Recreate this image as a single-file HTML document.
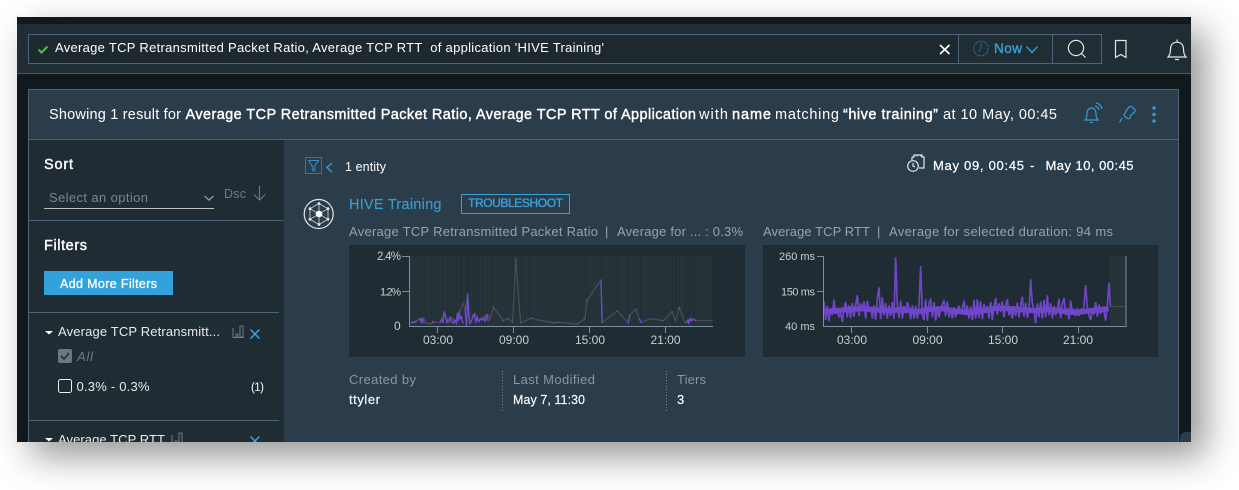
<!DOCTYPE html>
<html><head><meta charset="utf-8"><style>
html,body{margin:0;padding:0;background:#fff;width:1239px;height:490px;overflow:hidden}
#box{position:absolute;left:17px;top:17px;width:1174px;height:425px;box-shadow:14px 14px 34px rgba(0,0,0,.42)}
svg{position:absolute;left:0;top:0;display:block}
text{font-family:"Liberation Sans",sans-serif;font-size:13px;fill:#fff;white-space:pre}
.m{stroke:#fff;stroke-width:.4}
.g{fill:#99a3a9}
.t{fill:#c9ced1;font-size:11.5px;text-anchor:middle}
.y{fill:#c9ced1;font-size:11px}
.b{fill:none;stroke:#3a9bd0;stroke-width:1.2}
.w{fill:none;stroke:#e4e7e8;stroke-width:1.2}
.ax{stroke:#7c8f9e;stroke-width:1;fill:none}
</style></head><body>
<div id="box"></div>
<svg width="1239" height="490" viewBox="0 0 1239 490">
<defs><clipPath id="c"><rect x="17" y="17" width="1174" height="425"/></clipPath></defs>
<g clip-path="url(#c)">
<rect x="17" y="17" width="1174" height="425" fill="#12191d"/>
<rect x="17" y="24" width="1174" height="49" fill="#202d35"/>
<rect x="17" y="73" width="1174" height="1" fill="#465b6b"/>
<rect x="28.5" y="34.5" width="1073" height="29" fill="#1d282f" stroke="#4d6479"/>
<rect x="958" y="35" width="143" height="28" fill="#202d35"/>
<path d="M958.5 34.5V63.5M1052.5 34.5V63.5" stroke="#4d6479"/>
<path d="M38.5 49.5l3 3 6-6" fill="none" stroke="#4fb848" stroke-width="2.2"/>
<text x="55" y="52" textLength="549">Average TCP Retransmitted Packet Ratio, Average TCP RTT  of application 'HIVE Training'</text>
<path d="M940 45l9.5 9M949.5 45l-9.5 9" stroke="#fff" stroke-width="1.6" fill="none"/>
<circle cx="981" cy="48.5" r="7.3" fill="none" stroke="#246d95" stroke-width="1.1" stroke-dasharray="2 .8"/>
<path d="M981 43v5.5l-2.5 3" fill="none" stroke="#246d95"/>
<text x="994" y="53" textLength="28" class="m" style="fill:#3a9bd0;stroke:#3a9bd0;font-size:13.5px">Now</text>
<path d="M1026.5 46.5l5.5 6 5.5-6" fill="none" stroke="#3a9bd0" stroke-width="1.4"/>
<circle cx="1076" cy="48" r="7.6" class="w" stroke-width="1.3"/>
<path d="M1081.5 53.5l4 4" class="w"/>
<path d="M1115.5 40.5h10.5v17l-5.2-3-5.3 3z" class="w"/>
<path d="M1168 57c2-2 2.5-4 2.5-8 0-4 2.5-6.8 6.5-6.8s6.5 2.8 6.5 6.8c0 4 .5 6 2.5 8z M1177 39.5v2.5M1175 59.5h4" class="w"/>

<rect x="28.5" y="89.5" width="1150" height="360" fill="#2b3c4b" stroke="#4d6479"/>
<rect x="29" y="139" width="1149" height="1" fill="#4d6479"/>
<rect x="29" y="140" width="255" height="302" fill="#1f2c34"/>
<rect x="1179" y="90" width="12" height="352" fill="#12191d"/>
<path d="M1180 442v-4q0-5 5-6h6v10z" fill="#2b3c4b"/>

<text x="49" y="119" textLength="132" style="font-size:14.5px">Showing 1 result for</text>
<text x="185.5" y="119" textLength="510.5" class="m" style="font-size:14.5px">Average TCP Retransmitted Packet Ratio, Average TCP RTT of Application</text>
<text x="699" y="119" textLength="29" style="font-size:14.5px">with</text>
<text x="732" y="119" textLength="39" class="m" style="font-size:14.5px">name</text>
<text x="775" y="119" textLength="64" style="font-size:14.5px">matching</text>
<text x="843" y="119" textLength="95" class="m" style="font-size:14.5px">“hive training”</text>
<text x="943" y="119" textLength="114" style="font-size:14.5px">at 10 May, 00:45</text>

<path d="M1085 120c1.5-1.5 2-3 2-6.500 0-3 1.700-5.500 4.500-5.500s4.500 2.500 4.500 5.500c0 3.500.5 5 2 6.500z M1090 122.500h3M1095 106c2 .5 3.500 2 4 4M1096 103c3 .5 5.500 3 6 6" class="b"/>
<path d="M1126 111l3-4c1-1 2-1 3 0l2.500 2c1 1 1 2 0 3l-4 3.500-.5 2.500c-.5 1-1.500 1-2.500.5l-3-2.500c-1-1-.5-2 .5-2.500zM1122 118l-2.500 4.500" class="b" stroke-width="1.5"/>
<circle cx="1154" cy="108" r="1.7" fill="#3a9bd0"/><circle cx="1154" cy="114.5" r="1.7" fill="#3a9bd0"/><circle cx="1154" cy="121" r="1.7" fill="#3a9bd0"/>

<!-- sidebar -->
<text x="44" y="169" textLength="29" class="m" style="font-size:14.5px">Sort</text>
<text x="49" y="202" textLength="99" style="fill:#7b868d">Select an option</text>
<path d="M204.5 196l4.500 4 4.500-4" fill="none" stroke="#8a949a" stroke-width="1.5"/>
<rect x="44" y="208" width="170" height="1" fill="#b9bfc2"/>
<text x="224" y="198" textLength="22" style="fill:#6f7b82;font-size:12.5px">Dsc</text>
<path d="M259.5 186v14M254 194.500l5.500 5.500 5.500-5.500" fill="none" stroke="#6f7b82" stroke-width="1.1"/>
<rect x="29" y="220" width="255" height="1" fill="#4d6479"/>
<text x="44" y="250" textLength="43" class="m" style="font-size:14.5px">Filters</text>
<rect x="44" y="271" width="129" height="24" fill="#34a2da"/>
<text x="60" y="288" textLength="97" class="m" style="font-size:12.5px;stroke-width:.3">Add More Filters</text>
<rect x="29" y="312" width="250" height="1" fill="#4d6479"/>
<path d="M45 331h8l-4 3.500z" fill="#fff"/>
<text x="58" y="336" textLength="162" style="fill:#e8eaeb">Average TCP Retransmitt...</text>
<path d="M232.5 337.500h11.500M233 328v9M236 334v3h2v-3zM240 329v8h3v-11h-3z" fill="none" stroke="#717c83"/>
<path d="M250.5 329.500l9 9M259.5 329.500l-9 9" stroke="#35a9e5" stroke-width="1.4" fill="none"/>
<rect x="58" y="349" width="14" height="14" rx="2" fill="#6b7682"/>
<path d="M61 356l3 3 5-6" fill="none" stroke="#232d34" stroke-width="1.6"/>
<text x="77" y="361" textLength="16" style="fill:#6f7b82;font-style:italic">All</text>
<rect x="58.5" y="379.500" width="13" height="13" rx="2" fill="none" stroke="#eef0f1"/>
<text x="76.5" y="391" textLength="73" style="fill:#e8eaeb">0.3% - 0.3%</text>
<text x="251" y="391" textLength="13" style="font-size:11.5px">(1)</text>
<rect x="29" y="420" width="250" height="1" fill="#4d6479"/>
<path d="M45 438h8l-4 3.500z" fill="#fff"/>
<text x="58" y="444" textLength="107" style="fill:#e8eaeb">Average TCP RTT</text>
<path d="M171.5 444.500h11.500M172 435v9M175 441v3h2v-3zM179 436v8h3v-11h-3z" fill="none" stroke="#717c83"/>
<path d="M250.5 436.500l9 9M259.500 436.500l-9 9" stroke="#35a9e5" stroke-width="1.4" fill="none"/>

<!-- right top -->
<rect x="305.5" y="157.500" width="16" height="16" fill="none" stroke="#2b78a3" stroke-width="1"/>
<path d="M308.5 160.500h10l-3.800 5.500v5l-2.400-1v-4z" fill="none" stroke="#3a8fbd"/>
<path d="M332 163l-5 4.500 5 4.500" fill="none" stroke="#3a9bd0" stroke-width="1.5"/>
<text x="345" y="171" textLength="41" style="font-size:12.5px">1 entity</text>
<circle cx="913" cy="166" r="5.3" class="w" fill="none"/>
<path d="M913 163v3l2 1M912 157h2v-2h8v2h2v11h-5M912 157v3M917 154.500v2M921 154.500v2" class="w" stroke-width="1"/>
<text x="933" y="170" textLength="91" class="m" style="font-size:13px;stroke-width:.25">May 09, 00:45</text>
<text x="1030" y="170" class="m" style="font-size:13px;stroke-width:.25">-</text>
<text x="1045.5" y="170" textLength="88" class="m" style="font-size:13px;stroke-width:.25">May 10, 00:45</text>

<!-- hive -->
<circle cx="318.7" cy="214" r="14.500" fill="none" stroke="#e4e7e8" stroke-width="1.2"/>
<path d="M319 203.500l9 5.200v10.600l-9 5.200-9-5.200v-10.600zM319 203.500v21M310 208.700l18 10.600M328 208.700l-18 10.600" fill="none" stroke="#d8dcde" stroke-width=".8"/>
<circle cx="319" cy="214" r="3.3" fill="#fff"/>
<g fill="#e8eaeb"><circle cx="319" cy="203.500" r="1.4"/><circle cx="328" cy="208.700" r="1.4"/><circle cx="328" cy="219.300" r="1.4"/><circle cx="319" cy="224.500" r="1.4"/><circle cx="310" cy="219.300" r="1.4"/><circle cx="310" cy="208.700" r="1.4"/></g>
<text x="349" y="209" textLength="92.5" style="fill:#3a9bd0;font-size:14.5px;stroke:#3a9bd0;stroke-width:.15">HIVE Training</text>
<rect x="461.5" y="194.500" width="108" height="19" fill="none" stroke="#3aa3dc" stroke-width="1"/>
<text x="468" y="207" textLength="95" class="m" style="fill:#3aa3dc;stroke:#3aa3dc;font-size:12px;stroke-width:.35">TROUBLESHOOT</text>

<text x="349" y="236" textLength="249" class="g">Average TCP Retransmitted Packet Ratio</text>
<text x="605" y="236" class="g">|</text>
<text x="617" y="236" textLength="126" class="g">Average for ... : 0.3%</text>
<text x="763" y="236" textLength="107" class="g">Average TCP RTT</text>
<text x="877" y="236" class="g">|</text>
<text x="889" y="236" textLength="224" class="g">Average for selected duration: 94 ms</text>

<!-- chart 1 -->
<rect x="349" y="245" width="396" height="112" fill="#1f2c34"/>
<g transform="translate(345,240) scale(.33333)">
<rect x="195" y="48" width="908" height="211" fill="#263339"/>
<g fill="#222f36">
<rect x="204" y="48" width="4" height="211"/><rect x="216" y="48" width="3" height="211"/><rect x="226" y="48" width="5" height="211"/><rect x="240" y="48" width="3" height="211"/><rect x="258" y="48" width="4" height="211"/><rect x="275" y="48" width="3" height="211"/><rect x="290" y="48" width="6" height="211"/><rect x="306" y="48" width="3" height="211"/><rect x="318" y="48" width="4" height="211"/><rect x="331" y="48" width="5" height="211"/><rect x="345" y="48" width="8" height="211"/><rect x="362" y="48" width="14" height="211"/><rect x="383" y="48" width="5" height="211"/><rect x="396" y="48" width="6" height="211"/><rect x="412" y="48" width="4" height="211"/><rect x="425" y="48" width="4" height="211"/><rect x="438" y="48" width="3" height="211"/><rect x="503" y="48" width="3" height="211"/><rect x="527" y="48" width="4" height="211"/><rect x="552" y="48" width="6" height="211"/><rect x="624" y="48" width="3" height="211"/><rect x="638" y="48" width="4" height="211"/><rect x="696" y="48" width="3" height="211"/><rect x="706" y="48" width="3" height="211"/><rect x="722" y="48" width="5" height="211"/><rect x="767" y="48" width="6" height="211"/><rect x="815" y="48" width="3" height="211"/><rect x="850" y="48" width="5" height="211"/><rect x="870" y="48" width="3" height="211"/><rect x="884" y="48" width="6" height="211"/><rect x="916" y="48" width="3" height="211"/><rect x="955" y="48" width="3" height="211"/><rect x="981" y="48" width="3" height="211"/><rect x="990" y="48" width="4" height="211"/><rect x="1002" y="48" width="3" height="211"/><rect x="1020" y="48" width="3" height="211"/><rect x="1028" y="48" width="8" height="211"/><rect x="1044" y="48" width="5" height="211"/>
</g>
<polyline fill="none" stroke="#4a5256" stroke-width="3.5" points="197,248 225,238 235,234 245,250 258,252 265,245 285,248 298,215 310,248 320,232 330,248 345,215 353,190 362,205 368,160 375,250 390,222 400,245 415,232 428,222 435,238 445,202 475,242 490,236 503,248 512,58 527,248 558,235 625,249 640,247 697,252 720,236 726,180 768,120 772,248 817,212 850,250 855,224 872,208 887,248 917,236 955,242 981,215 991,243 1003,203 1020,248 1037,236 1055,242 1103,242"/>
<g fill="none" stroke="#7347d0" stroke-width="4">
<polyline points="199,248 204,248 210,246 216,245"/>
<polyline points="222,240 226,236 229,250 232,234 235,244 238,250"/>
<polyline points="260,250 264,245 268,248"/>
<polyline points="285,248 290,238 294,250 298,214 302,232 306,248 311,240 316,232 320,246 325,250 329,240 334,250 337,218 340,244 343,214 346,238 349,228 352,246 356,250"/>
<polyline points="360,205 363,240 365,258 368,160 371,220 374,250 379,246 384,226 388,222 392,248 397,230 402,244 407,236 412,240 416,232 420,246 425,222 430,244"/>
<polyline points="768,120 771,248"/>
<polyline points="850,250 854,224"/>
<polyline points="884,236 888,248"/>
<polyline points="1024,250 1029,240 1032,250 1036,236 1040,242 1046,238 1053,242"/>
</g>
<g fill="#7347d0"><circle cx="512" cy="58" r="2.5"/><circle cx="726" cy="180" r="2.5"/><circle cx="445" cy="202" r="2.5"/><circle cx="558" cy="235" r="2.5"/><circle cx="817" cy="212" r="2"/><circle cx="872" cy="208" r="2.5"/><circle cx="981" cy="215" r="2"/><circle cx="1003" cy="203" r="2.5"/><circle cx="625" cy="249" r="2"/><circle cx="640" cy="247" r="2"/><circle cx="697" cy="252" r="2"/><circle cx="720" cy="236" r="2"/><circle cx="917" cy="236" r="2"/><circle cx="955" cy="242" r="2"/><circle cx="527" cy="248" r="2"/><circle cx="475" cy="242" r="2"/><circle cx="490" cy="236" r="2"/></g>
</g>
<path d="M409.5 256v70.500H713M402 256.500h7M402 291.500h7M437.500 327v6M513.500 327v6M589.500 327v6M665.500 327v6" class="ax"/>
<text x="377" y="260" textLength="24" class="y" style="font-size:11.5px">2.4%</text>
<text x="380" y="295.5" textLength="21" class="y">1.2%</text>
<text x="394" y="330" textLength="7" class="y" style="font-size:12px">0</text>
<text x="438" y="344" class="t" style="font-size:12px">03:00</text>
<text x="514" y="344" class="t" style="font-size:12px">09:00</text>
<text x="590" y="344" class="t" style="font-size:12px">15:00</text>
<text x="665.5" y="344" class="t" style="font-size:12px">21:00</text>

<!-- chart 2 -->
<rect x="763" y="245" width="395" height="112" fill="#1f2c34"/>
<g transform="translate(760,240) scale(.33333)">
<rect x="1050" y="48" width="49" height="211" fill="#263339"/>
<path d="M1050 200H1099" stroke="#474f53" stroke-width="3"/>
<polyline fill="none" stroke="#7046c8" stroke-width="5" stroke-linejoin="bevel" points="192,184 197,240 202,198 207,244 212,205 217,225 222,178 227,222 232,208 237,232 242,220 247,246 252,206 257,186 262,232 267,196 272,234 277,188 282,230 287,194 292,166 297,228 302,190 307,214 312,184 317,236 322,182 327,212 332,200 337,236 342,196 347,240 352,176 357,142 362,238 367,172 372,226 377,190 382,236 387,196 392,228 397,186 402,236 407,52 412,196 417,234 422,182 427,236 432,198 437,220 442,186 447,204 452,238 457,196 462,236 467,198 472,236 477,194 482,78 487,224 492,240 497,178 502,242 507,190 512,176 517,232 522,186 527,242 532,208 537,232 542,206 547,194 552,180 557,228 562,184 567,232 572,204 577,236 582,202 587,232 592,210 597,198 602,218 607,206 612,182 617,226 622,196 627,236 632,200 637,240 642,180 647,236 652,178 657,234 662,184 667,238 672,192 677,218 682,198 687,236 692,186 697,240 702,198 707,174 712,224 717,190 722,216 727,184 732,232 737,196 742,178 747,226 752,206 757,236 762,198 767,228 772,188 777,232 782,196 787,170 792,230 797,188 802,234 807,210 812,118 817,190 822,212 827,250 832,190 837,232 842,184 847,236 852,180 857,232 862,166 867,226 872,190 877,236 882,198 887,226 892,208 897,176 902,234 907,192 912,174 917,226 922,204 927,238 932,182 937,218 942,206 947,228 952,204 957,228 962,206 967,222 972,198 977,135 982,204 987,226 992,240 997,208 1002,224 1007,186 1012,230 1017,194 1022,222 1027,200 1032,214 1037,242 1042,196 1047,128 1051,198"/>
<polyline fill="none" stroke="#7046c8" stroke-width="16" points="196,215 230,212 270,208 310,206 350,210 390,212 430,208 470,216 510,208 550,206 590,214 630,218 670,212 710,204 750,206 790,210 830,212 870,208 910,214 950,218 990,212 1030,208 1046,206"/>
</g>
<path d="M823.5 256v70.500H1126V256M817 256.500h6M817 291.500h6M851.500 327v6M927.500 327v6M1002.500 327v6M1078.500 327v6" class="ax"/>
<text x="779" y="260" textLength="36" class="y">260 ms</text>
<text x="781" y="295.5" textLength="34" class="y">150 ms</text>
<text x="785" y="330" textLength="30" class="y">40 ms</text>
<text x="852" y="344" class="t" style="font-size:12px">03:00</text>
<text x="927.5" y="344" class="t" style="font-size:12px">09:00</text>
<text x="1003" y="344" class="t" style="font-size:12px">15:00</text>
<text x="1078" y="344" class="t" style="font-size:12px">21:00</text>

<!-- meta -->
<text x="349" y="384" textLength="67" style="fill:#8c979e">Created by</text>
<text x="349" y="404" textLength="31" class="m" style="stroke-width:.15">ttyler</text>
<path d="M502.5 371v40M666.500 371v40" stroke="#7c8a94" stroke-dasharray="1 2"/>
<text x="513" y="384" textLength="82" style="fill:#8c979e">Last Modified</text>
<text x="513" y="404" textLength="72" class="m" style="stroke-width:.15;font-size:12.5px">May 7, 11:30</text>
<text x="677" y="384" textLength="29" style="fill:#8c979e">Tiers</text>
<text x="677" y="404" textLength="7" class="m" style="stroke-width:.15">3</text>
</g>
</svg>
</body></html>
